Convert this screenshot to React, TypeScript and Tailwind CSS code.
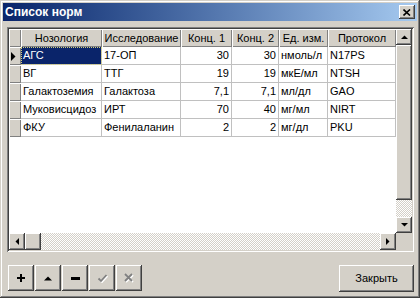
const RAISED =
  "shadow-[inset_-1px_-1px_#404040,inset_1px_1px_#ffffff,inset_-2px_-2px_#808080,inset_2px_2px_#d4d0c8]";
const CHECKER =
  "bg-[image:repeating-conic-gradient(#d4d0c8_0%_25%,#ffffff_0%_50%)] bg-[length:2px_2px]";

type Col = { label: string; w: string; right?: boolean };

const COLS: Col[] = [
  { label: "Нозология", w: "w-[81px]" },
  { label: "Исследование", w: "w-[79px]" },
  { label: "Конц. 1", w: "w-[51px]", right: true },
  { label: "Конц. 2", w: "w-[47px]", right: true },
  { label: "Ед. изм.", w: "w-[49px]" },
  { label: "Протокол", w: "w-[68px]" },
];

const ROWS: string[][] = [
  ["АГС", "17-ОП", "30", "30", "нмоль/л", "N17PS"],
  ["ВГ", "ТТГ", "19", "19", "мкЕ/мл", "NTSH"],
  ["Галактоземия", "Галактоза", "7,1", "7,1", "мл/дл", "GAO"],
  ["Муковисцидоз", "ИРТ", "70", "40", "мг/мл", "NIRT"],
  ["ФКУ", "Фенилаланин", "2", "2", "мг/дл", "PKU"],
];

// small black arrow used on scrollbars
function Arrow({ dir, color = "#000" }: { dir: "up" | "down" | "left" | "right"; color?: string }) {
  const pts = {
    up: "0,4 7,4 3.5,0.5",
    down: "0,0 7,0 3.5,3.5",
    left: "4,0 4,7 0.5,3.5",
    right: "0,0 0,7 3.5,3.5",
  }[dir];
  const vertical = dir === "up" || dir === "down";
  return (
    <svg width={vertical ? 7 : 4} height={vertical ? 4 : 7} viewBox={vertical ? "0 0 7 4" : "0 0 4 7"}>
      <polygon points={pts} fill={color} />
    </svg>
  );
}

function ScrollBtn({ dir, className = "" }: { dir: "up" | "down" | "left" | "right"; className?: string }) {
  return (
    <div className={`w-[16px] h-[16px] shrink-0 bg-[#d4d0c8] flex items-center justify-center ${RAISED} ${className}`}>
      <Arrow dir={dir} />
    </div>
  );
}

function ToolBtn({ children }: { children: React.ReactNode }) {
  return (
    <div className={`w-[26px] h-[26px] bg-[#d4d0c8] flex items-center justify-center ${RAISED}`}>{children}</div>
  );
}

export default function App() {
  return (
    <div className="w-[420px] h-[298px] bg-[#d4d0c8] p-[3px] flex flex-col font-['Liberation_Sans',Arial,sans-serif] text-[11px] text-black shadow-[inset_-1px_-1px_#404040,inset_1px_1px_#d4d0c8,inset_-2px_-2px_#808080,inset_2px_2px_#ffffff]">
      {/* title bar */}
      <div className="h-[18px] bg-linear-to-r from-[#0a246a] to-[#a6caf0] flex items-center justify-between pl-[2px] pr-[2px]">
        <span className="text-white font-bold text-[12px] leading-none">Список норм</span>
        <div className={`w-[16px] h-[14px] bg-[#d4d0c8] flex items-center justify-center ${RAISED}`}>
          <svg width="8" height="7" viewBox="0 0 8 7">
            <path d="M0.5 0.5 L7 6.5 M7 0.5 L0.5 6.5" stroke="#000" strokeWidth="1.6" />
          </svg>
        </div>
      </div>

      {/* grid */}
      <div className="ml-[4px] mt-[6px] w-[407px] h-[225px] p-[2px] flex flex-col bg-white shadow-[inset_1px_1px_#808080,inset_-1px_-1px_#ffffff,inset_2px_2px_#404040,inset_-2px_-2px_#d4d0c8]">
        <div className="flex h-[204px]">
          <div className="w-[387px] flex flex-col bg-white overflow-hidden">
            {/* header */}
            <div className="flex h-[18px] shrink-0">
              <div className="w-[12px] h-full bg-[#d4d0c8] shadow-[inset_1px_1px_#ffffff,inset_-1px_-1px_#808080]" />
              {COLS.map((c) => (
                <div
                  key={c.label}
                  className={`${c.w} h-full bg-[#d4d0c8] flex items-center justify-center whitespace-nowrap overflow-hidden shadow-[inset_1px_1px_#ffffff,inset_-1px_-1px_#808080]`}
                >
                  {c.label}
                </div>
              ))}
            </div>
            {/* rows */}
            {ROWS.map((r, ri) => (
              <div key={ri} className="flex h-[18px] shrink-0">
                <div className="w-[12px] h-full bg-[#d4d0c8] flex items-center pl-[2px] shadow-[inset_1px_1px_#ffffff,inset_-1px_-1px_#808080]">
                  {ri === 0 && (
                    <svg width="5" height="9" viewBox="0 0 5 9">
                      <polygon points="0,0 0,9 4.5,4.5" fill="#000" />
                    </svg>
                  )}
                </div>
                {r.map((v, ci) => {
                  const col = COLS[ci];
                  const selected = ri === 0 && ci === 0;
                  return (
                    <div
                      key={ci}
                      className={`${col.w} h-full border-r border-b border-[#c0c0c0] flex items-center whitespace-nowrap overflow-hidden px-[2px] ${
                        col.right ? "justify-end" : "justify-start"
                      } ${selected ? "bg-[#0a246a] text-white outline-1 outline-dotted outline-[#d4d080] -outline-offset-1" : ""}`}
                    >
                      {v}
                    </div>
                  );
                })}
              </div>
            ))}
          </div>
          {/* vertical scrollbar */}
          <div className="w-[16px] flex flex-col">
            <ScrollBtn dir="up" />
            <div className={`h-[155px] bg-[#d4d0c8] ${RAISED}`} />
            <div className={`flex-1 ${CHECKER}`} />
            <ScrollBtn dir="down" />
          </div>
        </div>
        {/* horizontal scrollbar */}
        <div className="flex h-[17px]">
          <div className="w-[387px] flex">
            <ScrollBtn dir="left" className="h-[17px]" />
            <div className={`w-[16px] h-[17px] bg-[#d4d0c8] ${RAISED}`} />
            <div className={`flex-1 ${CHECKER}`} />
            <ScrollBtn dir="right" className="h-[17px]" />
          </div>
          <div className="w-[16px] bg-[#d4d0c8]" />
        </div>
      </div>

      {/* bottom buttons */}
      <div className="mt-[13px] ml-[5px] mr-[3px] flex items-start justify-between">
        <div className="flex gap-[1px]">
          <ToolBtn>
            <svg width="8" height="8" viewBox="0 0 8 8">
              <path d="M0 3 H8 V5 H0 Z M3 0 H5 V8 H3 Z" fill="#000" />
            </svg>
          </ToolBtn>
          <ToolBtn>
            <svg width="8" height="5" viewBox="0 0 8 5">
              <polygon points="0,4.5 8,4.5 4,0.5" fill="#000" />
            </svg>
          </ToolBtn>
          <ToolBtn>
            <svg width="9" height="3" viewBox="0 0 9 3">
              <rect x="0" y="0" width="9" height="3" fill="#000" />
            </svg>
          </ToolBtn>
          <ToolBtn>
            <svg width="11" height="10" viewBox="0 0 11 10">
              <path d="M1.5 5.5 L4 8 L9.5 2" stroke="#ffffff" strokeWidth="1.8" fill="none" transform="translate(1 1)" />
              <path d="M1.5 5.5 L4 8 L9.5 2" stroke="#808080" strokeWidth="1.8" fill="none" />
            </svg>
          </ToolBtn>
          <ToolBtn>
            <svg width="10" height="10" viewBox="0 0 10 10">
              <path d="M1 1 L8 8 M8 1 L1 8" stroke="#ffffff" strokeWidth="1.8" transform="translate(1 1)" />
              <path d="M1 1 L8 8 M8 1 L1 8" stroke="#808080" strokeWidth="1.8" />
            </svg>
          </ToolBtn>
        </div>
        <div className={`w-[75px] h-[27px] bg-[#d4d0c8] flex items-center justify-center ${RAISED}`}>Закрыть</div>
      </div>
    </div>
  );
}
